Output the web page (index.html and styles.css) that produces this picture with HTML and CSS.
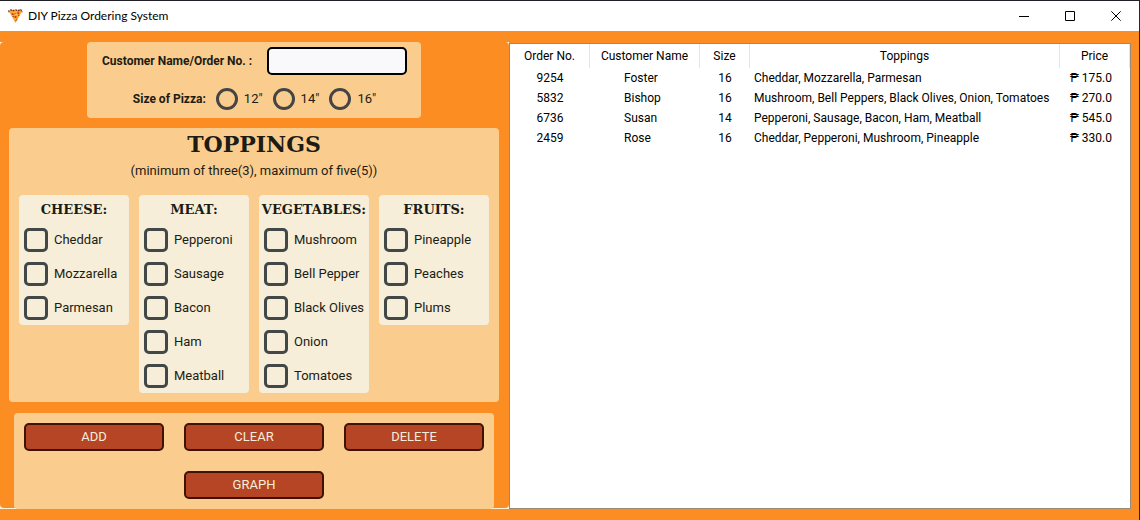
FILE: index.html
```html
<!DOCTYPE html>
<html lang="en">
<head>
<meta charset="utf-8">
<title>DIY Pizza Ordering System</title>
<link rel="stylesheet" href="styles.css">
</head>
<body>
<div class="window">
  <header class="titlebar">
    <svg class="app-icon" viewBox="0 0 16 16" aria-hidden="true">
      <path d="M1 3L4 1L8 2L12 1L15 3L8 15.500Z" fill="#fba62f"/>
      <path d="M1 4V2.500L3 1.500L5 2.500L8 1.500L11 2.500L13 1L15 2.500V4" fill="none" stroke="#7a3018" stroke-width="1.400" stroke-dasharray="2 1"/>
      <path d="M4 5h2v2H4zM10 4h2v2h-2zM7 8h2v2H7zM9 11h1v1H9z" fill="#d8341c"/>
      <path d="M7 5h1v1H7zM11 7h1v1h-1zM5 8h1v1H5zM8 12h1v1H8z" fill="#7a3018"/>
      <path d="M6 4h1v1H6zM8 6h2v1H8zM7 11h1v1H7z" fill="#ffd45c"/>
    </svg>
    <h1 class="window-title">DIY Pizza Ordering System</h1>
    <div class="window-controls">
      <button type="button" class="window-button" aria-label="Minimize"><svg viewBox="0 0 10 10"><path d="M0 5.500H10"/></svg></button>
      <button type="button" class="window-button" aria-label="Maximize"><svg viewBox="0 0 10 10"><path d="M.5 .5H9.500V9.500H.5Z"/></svg></button>
      <button type="button" class="window-button" aria-label="Close"><svg viewBox="0 0 10 10"><path d="M.3 .3L9.700 9.700M9.700 .3L.3 9.700"/></svg></button>
    </div>
  </header>
  <main class="content">
    <form class="order-frame">
      <div class="order-form">
        <section class="panel customer">
          <div class="field-row">
            <label class="field-label name-label" for="customer">Customer Name/Order No. :</label>
            <input class="text-input" id="customer" type="text">
          </div>
          <div class="size-row" role="radiogroup" aria-labelledby="size-label">
            <span class="field-label" id="size-label">Size of Pizza:</span>
            <label class="choice size"><input class="radio" type="radio" name="size" value="12">12"</label>
            <label class="choice size"><input class="radio" type="radio" name="size" value="14">14"</label>
            <label class="choice size"><input class="radio" type="radio" name="size" value="16">16"</label>
          </div>
        </section>
        <section class="panel toppings">
          <h2 class="toppings-title">TOPPINGS</h2>
          <p class="toppings-note">(minimum of three(3), maximum of five(5))</p>
          <div class="groups">
            <fieldset class="group">
              <legend class="group-title">CHEESE:</legend>
              <label class="choice"><input class="check" type="checkbox">Cheddar</label>
              <label class="choice"><input class="check" type="checkbox">Mozzarella</label>
              <label class="choice"><input class="check" type="checkbox">Parmesan</label>
            </fieldset>
            <fieldset class="group">
              <legend class="group-title">MEAT:</legend>
              <label class="choice"><input class="check" type="checkbox">Pepperoni</label>
              <label class="choice"><input class="check" type="checkbox">Sausage</label>
              <label class="choice"><input class="check" type="checkbox">Bacon</label>
              <label class="choice"><input class="check" type="checkbox">Ham</label>
              <label class="choice"><input class="check" type="checkbox">Meatball</label>
            </fieldset>
            <fieldset class="group">
              <legend class="group-title">VEGETABLES:</legend>
              <label class="choice"><input class="check" type="checkbox">Mushroom</label>
              <label class="choice"><input class="check" type="checkbox">Bell Pepper</label>
              <label class="choice"><input class="check" type="checkbox">Black Olives</label>
              <label class="choice"><input class="check" type="checkbox">Onion</label>
              <label class="choice"><input class="check" type="checkbox">Tomatoes</label>
            </fieldset>
            <fieldset class="group">
              <legend class="group-title">FRUITS:</legend>
              <label class="choice"><input class="check" type="checkbox">Pineapple</label>
              <label class="choice"><input class="check" type="checkbox">Peaches</label>
              <label class="choice"><input class="check" type="checkbox">Plums</label>
            </fieldset>
          </div>
        </section>
        <section class="panel actions">
          <button class="action" type="button">ADD</button>
          <button class="action" type="button">CLEAR</button>
          <button class="action" type="button">DELETE</button>
          <button class="action graph" type="button">GRAPH</button>
        </section>
      </div>
    </form>
    <section class="orders">
      <table class="orders-table">
        <colgroup><col class="col-order"><col class="col-name"><col class="col-size"><col class="col-toppings"><col class="col-price"></colgroup>
        <thead>
          <tr><th>Order No.</th><th>Customer Name</th><th>Size</th><th>Toppings</th><th>Price</th></tr>
        </thead>
        <tbody>
          <tr><td>9254</td><td class="name">Foster</td><td>16</td><td class="list">Cheddar, Mozzarella, Parmesan</td><td class="price">₱ 175.0</td></tr>
          <tr><td>5832</td><td class="name">Bishop</td><td>16</td><td class="list">Mushroom, Bell Peppers, Black Olives, Onion, Tomatoes</td><td class="price">₱ 270.0</td></tr>
          <tr><td>6736</td><td class="name">Susan</td><td>14</td><td class="list">Pepperoni, Sausage, Bacon, Ham, Meatball</td><td class="price">₱ 545.0</td></tr>
          <tr><td>2459</td><td class="name">Rose</td><td>16</td><td class="list">Cheddar, Pepperoni, Mushroom, Pineapple</td><td class="price">₱ 330.0</td></tr>
        </tbody>
      </table>
    </section>
  </main>
</div>
</body>
</html>
```
FILE: styles.css
```css
* { box-sizing: border-box; }

body {
  margin: 0;
  background: #fc8d23;
  color: #1c1c14;
  font: 13px/16px Roboto, sans-serif;
}

.window {
  display: flex;
  flex-direction: column;
  min-height: 100vh;
  border-top: 1px solid #1f2028;
  border-right: 1px solid #33231c;
  background: #fc8d23;
}

.titlebar {
  display: flex;
  align-items: center;
  height: 30px;
  padding-left: 8px;
  background: #fff;
  color: #000;
}

.app-icon { width: 15px; height: 16px; }

.window-title {
  margin: 0 auto 0 5px;
  font: 12px/16px Lato, sans-serif;
}

.window-controls { display: flex; }

.window-button {
  display: grid;
  place-items: center;
  width: 46px;
  height: 30px;
  padding: 0;
  border: 0;
  background: none;
}

.window-button svg {
  width: 10px;
  height: 10px;
  fill: none;
  stroke: #000;
  stroke-width: 1;
}

.content {
  display: flex;
  flex: 1;
  padding: 11px 8px 11px 0;
}

.order-frame {
  display: flex;
  flex: none;
  padding-bottom: 1px;
  background: #fdf3dd;
}

.order-form {
  display: flex;
  flex-direction: column;
  align-items: center;
  padding: 0 10px 0 9px;
  border-radius: 4px;
  background: #fc8d23;
}

.panel {
  border-radius: 4px;
  background: #facd8e;
}

.customer { padding: 5px 14px 8px 15px; }

.field-row {
  display: flex;
  align-items: center;
  gap: 10px;
}

.field-label { font-weight: 700; font-size: 12px; }
.name-label { min-width: 155px; }

.text-input {
  width: 140px;
  height: 28px;
  padding: 0 6px;
  border: 2px solid #000;
  border-radius: 5px;
  background: #f9f9fb;
  font: inherit;
}

.size-row {
  display: flex;
  align-items: center;
  justify-content: center;
  gap: 10px;
  margin-top: 13px;
}

.choice {
  display: flex;
  align-items: center;
  gap: 6px;
  white-space: nowrap;
}

.radio,
.check {
  flex: none;
  appearance: none;
  margin: 0;
  border: 3px solid #444;
}

.radio {
  width: 22px;
  height: 22px;
  border-radius: 50%;
}

.check {
  width: 24px;
  height: 24px;
  border-color: #424748;
  border-radius: 5px;
}

.radio:checked,
.check:checked { background: #b54525; }

.toppings {
  margin-top: 10px;
  padding: 2px 10px 9px;
  text-align: center;
}

.toppings-title {
  margin: 0;
  font: 700 22px/28px "DejaVu Serif", serif;
}

.toppings-note { margin: 5px 0 16px; }

.groups {
  display: grid;
  grid-template-columns: repeat(4, 110px);
  align-items: start;
  gap: 10px;
}

.group {
  display: flex;
  flex-direction: column;
  gap: 10px;
  min-width: 0;
  margin: 0;
  padding: 5px;
  border: 0;
  border-radius: 4px;
  background: #f6eed8;
}

.group-title {
  float: left;
  width: 100%;
  display: flex;
  justify-content: center;
  padding: 2px 0 0;
  font: 700 13px/16px "DejaVu Serif", serif;
}

.actions {
  display: grid;
  grid-template-columns: repeat(3, 140px);
  gap: 20px;
  margin: 11px 0 -1px;
  padding: 10px;
}

.action {
  height: 28px;
  padding: 0;
  border: 2px solid #3e1204;
  border-radius: 5px;
  background: #b54525;
  color: #f6eed8;
  font: inherit;
}

.graph { grid-column: 2; }

.orders {
  flex: 1;
  margin-top: 1px;
  border: 1px solid #9a8a78;
  background: #fff;
  overflow: hidden;
}

.orders-table {
  width: 100%;
  table-layout: fixed;
  border-collapse: separate;
  border-spacing: 0;
  color: #000;
  font: 12px/20px Roboto, sans-serif;
  text-align: center;
  white-space: nowrap;
}

.col-order { width: 80px; }
.col-name { width: 110px; }
.col-size { width: 50px; }
.col-price { width: 70px; }

.orders-table th {
  height: 24px;
  padding: 0;
  border-right: 1px solid #e5e5e5;
  font-weight: 400;
}

.orders-table td { padding: 0; }
.orders-table .name { padding-left: 34px; text-align: left; }
.orders-table .list { padding-left: 4px; text-align: left; }
.orders-table .price { padding-left: 10px; text-align: left; }
```
